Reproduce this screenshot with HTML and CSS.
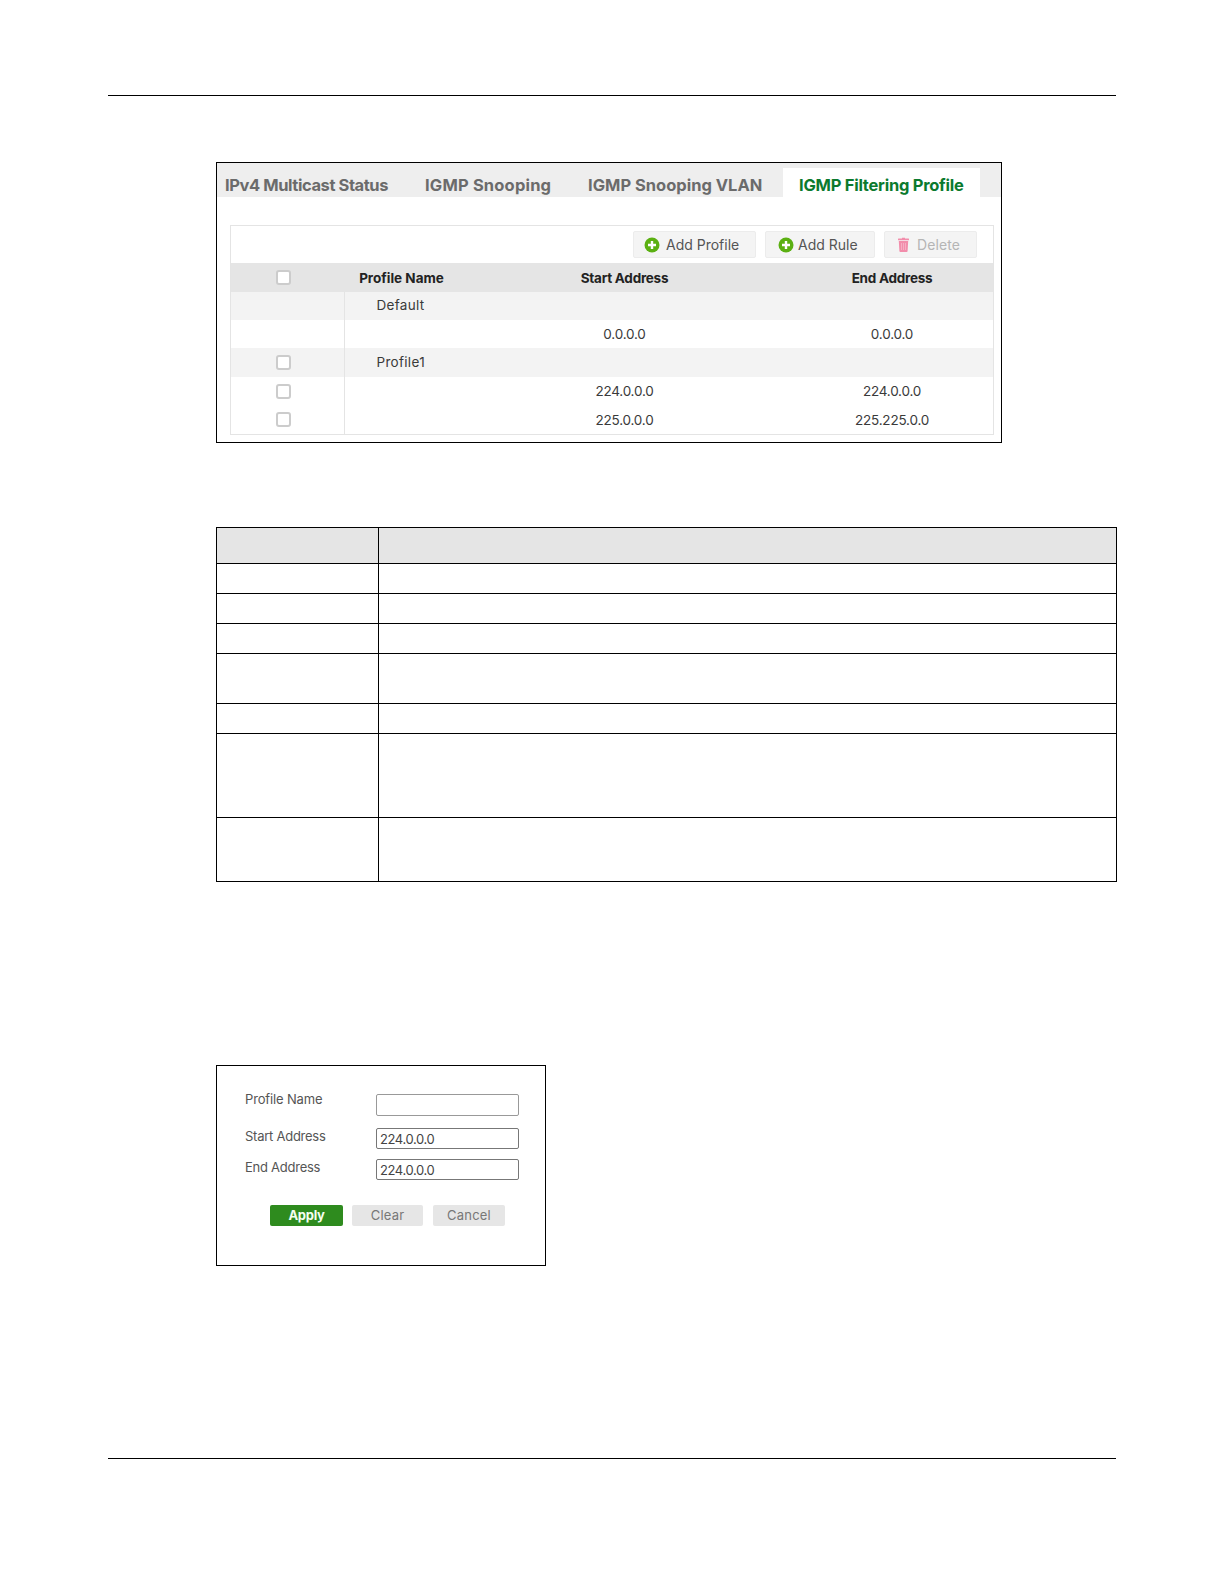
FILE: index.html
```html
<!DOCTYPE html>
<html lang="en">
<head>
<meta charset="utf-8">
<title>IGMP Filtering Profile</title>
<link rel="stylesheet" href="styles.css">
</head>
<body>
<div class="rule rule-top"></div>

<section class="shot shot-main">
  <nav class="tabs">
    <span class="tab tab-1">IPv4 Multicast Status</span>
    <span class="tab tab-2">IGMP Snooping</span>
    <span class="tab tab-3">IGMP Snooping VLAN</span>
    <span class="tab tab-active">IGMP Filtering Profile</span>
  </nav>
  <div class="panel">
    <div class="toolbar">
      <button class="tbtn tbtn-profile"><svg class="ico" viewBox="0 0 16 16"><circle cx="8" cy="8" r="7.5" fill="#5bb012"/><path d="M8 4v8M4 8h8" stroke="#fff" stroke-width="2.4"/></svg>Add Profile</button>
      <button class="tbtn tbtn-rule"><svg class="ico" viewBox="0 0 16 16"><circle cx="8" cy="8" r="7.5" fill="#5bb012"/><path d="M8 4v8M4 8h8" stroke="#fff" stroke-width="2.4"/></svg>Add Rule</button>
      <button class="tbtn tbtn-delete"><svg class="ico-trash" viewBox="0 0 12 15"><path d="M4.5 1.5V.8h3v.7h3.500a.5.5 0 0 1 .5.5v1.300H.5V2a.5.5 0 0 1 .5-.5Z" fill="#f28dab"/><path d="M1.300 4h9.400l-.6 10a1 1 0 0 1-1 1H2.900a1 1 0 0 1-1-1Z" fill="#f28dab"/><path d="M4 6v7M6 6v7M8 6v7" stroke="#f8bccd" stroke-width=".7"/></svg>Delete</button>
    </div>
    <table class="grid">
      <colgroup><col class="c-check"><col class="c-name"><col class="c-start"><col class="c-end"></colgroup>
      <tr class="head">
        <th class="cell-check"><span class="check"></span></th><th>Profile Name</th><th>Start Address</th><th>End Address</th>
      </tr>
      <tr class="group r-28"><td class="cell-check"></td><td class="pname">Default</td><td></td><td></td></tr>
      <tr class="r-28"><td class="cell-check"></td><td></td><td>0.0.0.0</td><td>0.0.0.0</td></tr>
      <tr class="group r-29"><td class="cell-check"><span class="check"></span></td><td class="pname">Profile1</td><td></td><td></td></tr>
      <tr class="r-28"><td class="cell-check"><span class="check"></span></td><td></td><td>224.0.0.0</td><td>224.0.0.0</td></tr>
      <tr class="r-29"><td class="cell-check"><span class="check"></span></td><td></td><td>225.0.0.0</td><td>225.225.0.0</td></tr>
    </table>
  </div>
</section>

<table class="doc">
  <colgroup><col class="d-left"><col></colgroup>
  <tr class="d-head"><th></th><th></th></tr>
  <tr class="h30"><td></td><td></td></tr>
  <tr class="h30"><td></td><td></td></tr>
  <tr class="h30"><td></td><td></td></tr>
  <tr class="h50"><td></td><td></td></tr>
  <tr class="h30"><td></td><td></td></tr>
  <tr class="h84"><td></td><td></td></tr>
  <tr class="h64"><td></td><td></td></tr>
</table>

<section class="shot shot-form">
  <div class="frow frow-1">
    <span class="flabel">Profile Name</span><span class="finput finput-tall"></span>
  </div>
  <div class="frow frow-2">
    <span class="flabel">Start Address</span><span class="finput">224.0.0.0</span>
  </div>
  <div class="frow frow-3">
    <span class="flabel">End Address</span><span class="finput">224.0.0.0</span>
  </div>
  <div class="factions">
    <button class="fbtn fbtn-apply">Apply</button>
    <button class="fbtn fbtn-clear">Clear</button>
    <button class="fbtn fbtn-cancel">Cancel</button>
  </div>
</section>

<div class="rule rule-bottom"></div>
</body>
</html>
```
FILE: styles.css
```css
* { box-sizing: border-box; }
html, body { margin: 0; padding: 0; background: #fff; }
body { width: 1224px; height: 1584px; overflow: hidden; font-family: "Inter", "Liberation Sans", sans-serif; color: #3a3a3a; }

.rule { height: 1px; width: 1008px; margin-left: 108px; background: #000; }
.rule-top { margin-top: 95px; }
.rule-bottom { margin-top: 192px; }

.shot { margin-left: 216px; border: 1px solid #000; background: #fff; }
.shot-main { margin-top: 66px; width: 786px; height: 281px; }

.tabs { display: flex; height: 34px; background: #eee; padding-left: 8px; align-items: flex-end; }
.tab { font-size: 16.500px; font-weight: 700; color: #6b6b6b; height: 29px; padding-top: 6px; line-height: 23px; white-space: nowrap; }
.tab-1 { width: 200px; letter-spacing: -.42px; }
.tab-2 { width: 163px; letter-spacing: .18px; }
.tab-3 { width: 195px; }
.tab-active { width: 197px; background: #fff; color: #0b7a2e; padding-left: 16px; letter-spacing: -.25px; }

.panel { margin: 28px 7px 0 13px; border: 1px solid #e4e4e4; }
.toolbar { height: 37px; display: flex; justify-content: flex-end; gap: 9px; padding: 5px 16px 0 0; }
.tbtn { height: 27px; display: flex; align-items: center; justify-content: flex-start; gap: 6px; background: #f4f4f4; border: 1px solid #ececec; border-radius: 2px; font: inherit; font-size: 14px; color: #555; padding: 0 0 0 10px; }
.tbtn-profile { width: 123px; }
.tbtn-rule { width: 110px; padding-left: 12px; gap: 4px; }
.tbtn-delete { width: 93px; color: #b5b5b5; padding-left: 12px; gap: 7px; letter-spacing: .1px; }
.ico { width: 16px; height: 16px; flex: none; }
.ico-trash { width: 13px; height: 15px; flex: none; }

.grid { width: 100%; border-collapse: collapse; table-layout: fixed; font-size: 13.500px; letter-spacing: -.2px; }
.c-check { width: 113px; }
.c-name { width: 114px; }
.c-start { width: 333px; }
.grid th, .grid td { padding: 0; text-align: center; vertical-align: middle; }
.grid .cell-check { padding-right: 9px; }
.grid td.cell-check { padding-right: 7px; }
.grid td:first-child { border-right: 1px solid #e4e4e4; }
.head { height: 29px; background: #e5e5e5; }
.head th { color: #222; font-weight: 700; font-size: 13.500px; letter-spacing: -.25px; }
.head th:nth-child(2) { letter-spacing: 0; padding-left: 1px; }
.r-28 { height: 28px; }
.r-29 { height: 29px; }
.group { background: #f3f3f3; }
.grid .pname { text-align: left; padding: 0 0 2px 32px; white-space: nowrap; letter-spacing: .3px; }
.check { display: block; margin: 0 auto; width: 15px; height: 15px; border: 2px solid #ccc; border-radius: 3px; background: #fff; }

.doc { margin: 84px 0 0 216px; width: 901px; border-collapse: collapse; table-layout: fixed; }
.doc th, .doc td { border: 1px solid #000; padding: 0; }
.d-left { width: 162px; }
.d-head { height: 36px; background: #e5e5e5; }
.h30 { height: 30px; }
.h50 { height: 50px; }
.h84 { height: 84px; }
.h64 { height: 64px; }

.shot-form { margin-top: 183px; width: 330px; height: 201px; padding: 28px 26px 0 28px; font-size: 13px; }
.frow { display: flex; justify-content: space-between; color: #555; }
.frow-1 { height: 22px; }
.frow-2 { height: 21px; margin-top: 12px; }
.frow-3 { height: 21px; margin-top: 10px; }
.flabel { line-height: 16px; white-space: nowrap; letter-spacing: -.25px; }
.frow-1 .flabel { margin-top: -3px; letter-spacing: -.15px; }
.finput { width: 143px; height: 21px; border: 1px solid #777; border-radius: 2px; background: #fff; color: #444; padding: 2px 0 0 3px; line-height: 16px; font-size: 13px; letter-spacing: -.4px; }
.finput-tall { height: 22px; border-color: #999; }
.factions { display: flex; margin: 25px 0 0 25px; gap: 9px; }
.fbtn { width: 72px; height: 21px; border: 0; border-radius: 2px; background: #e6e6e6; color: #777; font: inherit; font-size: 13px; letter-spacing: .2px; padding: 0 0 2px; }
.fbtn-apply { width: 73px; margin-right: -1px; background: #2e8b1e; color: #f4fff0; font-weight: 700; letter-spacing: -.3px; }
.fbtn-clear { width: 71px; margin-left: 1px; }
.fbtn-cancel { margin-left: 1px; }
```
